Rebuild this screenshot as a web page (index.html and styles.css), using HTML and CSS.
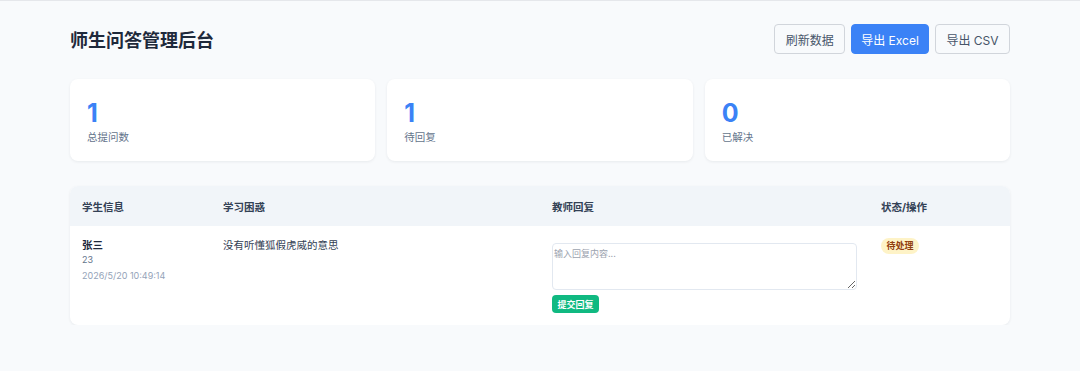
FILE: index.html
```html
<!DOCTYPE html>
<html>
	<head>
		<meta charset="UTF-8">
		<meta name="viewport" content="width=device-width, initial-scale=1.0">
		<title>师生问答管理后台</title>
		<link rel="stylesheet" href="styles.css">
	</head>
	<body>
		<div class="admin-page">
			<!--header-->
			<div class="admin-header">
				<h1 class="admin-title">师生问答管理后台</h1>
				<div class="admin-actions">
					<button class="admin-btn">刷新数据</button>
					<button class="admin-btn admin-btn-primary">导出 Excel</button>
					<button class="admin-btn">导出 CSV</button>
				</div>
			</div>
			<!--stats-->
			<div class="admin-stats">
				<div class="stat-card">
					<div class="stat-num">1</div>
					<div class="stat-label">总提问数</div>
				</div>
				<div class="stat-card">
					<div class="stat-num">1</div>
					<div class="stat-label">待回复</div>
				</div>
				<div class="stat-card">
					<div class="stat-num">0</div>
					<div class="stat-label">已解决</div>
				</div>
			</div>
			<!--table-->
			<div class="table-card">
				<table class="qa-table">
					<thead>
						<tr>
							<th class="col-student">学生信息</th>
							<th class="col-question">学习困惑</th>
							<th class="col-reply">教师回复</th>
							<th class="col-status">状态/操作</th>
						</tr>
					</thead>
					<tbody>
						<tr>
							<td>
								<div class="stu-name">张三</div>
								<div class="stu-id">23</div>
								<div class="stu-time">2026/5/20 10:49:14</div>
							</td>
							<td class="question-text">没有听懂狐假虎威的意思</td>
							<td>
								<textarea class="reply-input" placeholder="输入回复内容..."></textarea>
								<button class="reply-btn">提交回复</button>
							</td>
							<td><span class="status-badge">待处理</span></td>
						</tr>
					</tbody>
				</table>
			</div>
		</div>
	</body>
</html>
```

FILE: styles.css
```css
*{
	margin:0;
	padding:0;
	box-sizing:border-box;
}
body{
	background:#f8fafc;
	border-top:1px solid #e5e7eb;
	font-family:Inter,"Noto Sans CJK SC",sans-serif;
	color:#334155;
}
.admin-page{
	width:940px;
	margin:0 auto;
	padding-top:23px;
}
.admin-header{
	display:flex;
	justify-content:space-between;
	align-items:center;
	height:30px;
}
.admin-title{
	font-size:18px;
	font-weight:700;
	color:#1e293b;
}
.admin-actions{
	display:flex;
	gap:6px;
}
.admin-btn{
	height:30px;
	padding:0 10.5px;
	font-family:inherit;
	font-size:12px;
	color:#475569;
	background:#f8fafc;
	border:1px solid #d1d5db;
	border-radius:4px;
}
.admin-btn-primary{
	padding:0 9px;
	background:#3b82f6;
	border-color:#3b82f6;
	color:#fff;
}
.admin-stats{
	display:grid;
	grid-template-columns:repeat(3,1fr);
	gap:12px;
	margin-top:25px;
}
.stat-card{
	background:#fff;
	border-radius:8px;
	box-shadow:0 1px 3px rgba(15,23,42,.07);
	padding:20px 17px 15px;
}
.stat-num{
	font-size:25px;
	line-height:28px;
	font-weight:700;
	color:#3b82f6;
}
.stat-label{
	margin-top:3px;
	font-size:10.5px;
	line-height:16px;
	color:#64748b;
}
.table-card{
	margin-top:25px;
	background:#fff;
	border-radius:8px;
	box-shadow:0 1px 3px rgba(15,23,42,.07);
	overflow:hidden;
}
.qa-table{
	width:100%;
	border-collapse:collapse;
	table-layout:fixed;
}
.qa-table th{
	height:40px;
	padding:0 12px;
	background:#f1f5f9;
	text-align:left;
	font-size:10.5px;
	font-weight:700;
	color:#334155;
}
.col-student,.col-status{
	width:15%;
}
.col-question,.col-reply{
	width:35%;
}
.qa-table td{
	padding:12px;
	vertical-align:top;
	font-size:10.5px;
	line-height:15px;
}
.stu-name{
	font-weight:600;
	color:#1e293b;
}
.stu-id{
	font-size:9px;
	line-height:14px;
	color:#64748b;
}
.stu-time{
	margin-top:2px;
	font-size:9px;
	line-height:14px;
	color:#94a3b8;
}
.question-text{
	color:#334155;
}
.reply-input{
	display:block;
	width:100%;
	height:47px;
	margin-top:5px;
	padding:3px 1px;
	font-family:inherit;
	font-size:9px;
	line-height:13px;
	border:1px solid #e2e8f0;
	border-radius:4px;
	color:#334155;
}
.reply-input::placeholder{
	color:#9ca3af;
}
.reply-btn{
	display:block;
	height:18px;
	margin-top:5px;
	padding:0 5.5px;
	font-family:inherit;
	font-size:9px;
	font-weight:700;
	color:#fff;
	background:#10b981;
	border:none;
	border-radius:4px;
}
.status-badge{
	display:inline-block;
	padding:2px 5.5px;
	font-size:9px;
	line-height:12px;
	font-weight:700;
	color:#92400e;
	background:#fef3c7;
	border-radius:999px;
}
```
